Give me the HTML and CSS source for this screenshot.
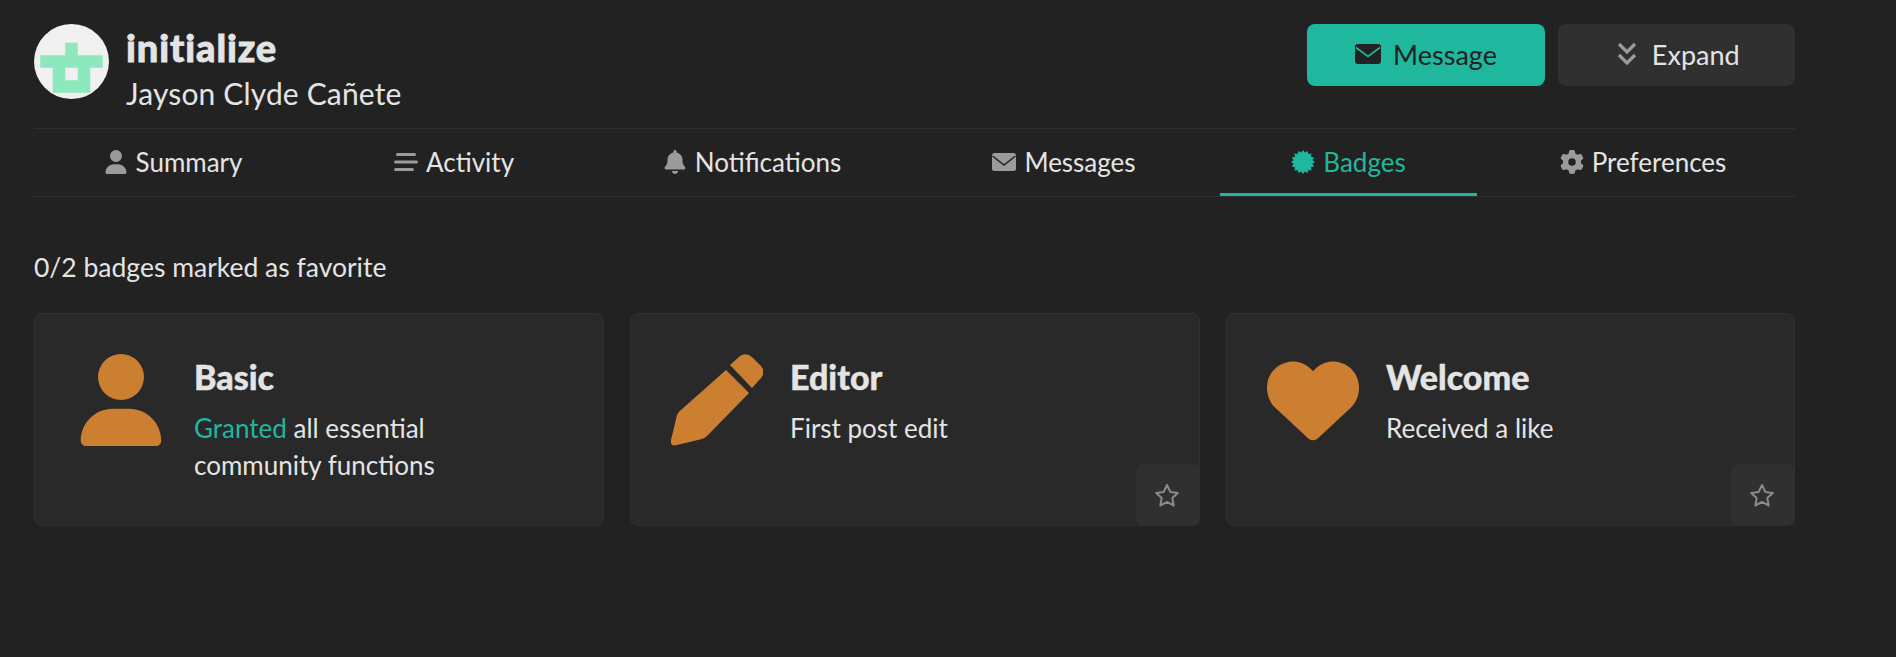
FILE: index.html
```html
<!DOCTYPE html>
<html lang="en">
<head>
    <meta charset="UTF-8">
    <meta name="viewport" content="width=device-width, initial-scale=1.0">
    <title>initialize - Badges</title>
    <link rel="stylesheet" href="styles.css">
</head>
<body>
    <div class="page">
        <header class="profile">
            <div class="profile-info">
                <svg class="avatar" viewBox="0 0 75 75">
                    <circle cx="37.5" cy="37.5" r="37.5" fill="#f0f0f0"/>
                    <path fill="#8de8bd" fill-rule="evenodd" d="M31.25 18.75h12.5v12.5h25v12.5h-12.5v25h-37.5v-25h-12.5v-12.5h25zM31.25 43.75v12.5h12.5v-12.5z"/>
                </svg>
                <div class="profile-names">
                    <h1>initialize</h1>
                    <p>Jayson Clyde Cañete</p>
                </div>
            </div>
            <div class="profile-actions">
                <button class="btn btn-primary" type="button">
                    <svg class="btn-icon" viewBox="0 0 26 20"><rect width="26" height="20" rx="3" fill="#222222"/><path d="M1 3.5L13 12.5L25 3.5" fill="none" stroke="#20b79f" stroke-width="1.6"/></svg>
                    Message
                </button>
                <button class="btn btn-dark" type="button">
                    <svg class="btn-icon-small" viewBox="0 0 20 24"><path d="M2 2L10 10L18 2M2 13L10 21L18 13" fill="none" stroke="#9b9b9b" stroke-width="3.2"/></svg>
                    Expand
                </button>
            </div>
        </header>

        <nav class="tabs">
            <a class="tab">
                <svg class="tab-icon" viewBox="0 0 448 512"><path d="M224 256A128 128 0 1 0 224 0a128 128 0 1 0 0 256zm-45.7 48C79.8 304 0 383.8 0 482.3C0 498.7 13.3 512 29.7 512H418.3c16.4 0 29.7-13.3 29.7-29.7C448 383.8 368.2 304 269.7 304H178.3z"/></svg>
                Summary
            </a>
            <a class="tab">
                <svg class="tab-icon" viewBox="0 0 24 24"><rect x="2" y="3" width="20" height="3" rx="1.5"/><rect x="0" y="10.5" width="24" height="3" rx="1.5"/><rect x="0" y="18" width="20" height="3" rx="1.5"/></svg>
                Activity
            </a>
            <a class="tab">
                <svg class="tab-icon" viewBox="0 0 448 512"><path d="M224 0c-17.7 0-32 14.3-32 32V51.2C119 66 64 130.6 64 208v18.8c0 47-17.3 92.4-48.5 127.6l-7.4 8.3c-8.4 9.4-10.4 22.9-5.3 34.4S19.4 416 32 416H416c12.6 0 24-7.4 29.2-18.9s3.1-25-5.3-34.4l-7.4-8.3C401.3 319.2 384 273.9 384 226.8V208c0-77.4-55-142-128-156.8V32c0-17.7-14.3-32-32-32zm45.3 493.3c12-12 18.7-28.3 18.7-45.3H224 160c0 17 6.7 33.3 18.7 45.3s28.3 18.7 45.3 18.7s33.3-6.7 45.3-18.7z"/></svg>
                Notifications
            </a>
            <a class="tab">
                <svg class="tab-icon" viewBox="0 0 24 24"><rect y="3" width="24" height="18" rx="2.5"/><path d="M0.5 6L12 15L23.5 6" fill="none" stroke="#222222" stroke-width="1.5"/></svg>
                Messages
            </a>
            <a class="tab tab-active">
                <svg class="tab-icon" viewBox="0 0 24 24"><polygon points="24,12 21.42,13.87 23.09,16.59 19.98,17.34 20.49,20.49 17.34,19.98 16.59,23.09 13.87,21.42 12,24 10.13,21.42 7.41,23.09 6.66,19.98 3.51,20.49 4.02,17.34 0.91,16.59 2.58,13.87 0,12 2.58,10.13 0.91,7.41 4.02,6.66 3.51,3.51 6.66,4.02 7.41,0.91 10.13,2.58 12,0 13.87,2.58 16.59,0.91 17.34,4.02 20.49,3.51 19.98,6.66 23.09,7.41 21.42,10.13"/></svg>
                Badges
            </a>
            <a class="tab tab-last">
                <svg class="tab-icon" viewBox="0 0 512 512"><path fill-rule="evenodd" d="M495.9 166.6c3.2 8.7 .5 18.4-6.4 24.6l-43.3 39.4c1.1 8.3 1.7 16.8 1.7 25.4s-.6 17.1-1.7 25.4l43.3 39.4c6.9 6.2 9.6 15.9 6.4 24.6c-4.4 11.9-9.7 23.3-15.8 34.3l-4.7 8.1c-6.6 11-14 21.4-22.1 31.2c-5.9 7.2-15.7 9.6-24.5 6.8l-55.7-17.7c-13.4 10.3-28.2 18.9-44 25.4l-12.5 57.1c-2 9.1-9 16.3-18.2 17.8c-13.8 2.3-28 3.5-42.5 3.5s-28.7-1.2-42.5-3.5c-9.2-1.5-16.2-8.7-18.2-17.8l-12.5-57.1c-15.8-6.5-30.6-15.1-44-25.4L83.1 425.9c-8.8 2.8-18.6 .3-24.5-6.8c-8.1-9.8-15.5-20.2-22.1-31.2l-4.7-8.1c-6.1-11-11.4-22.4-15.8-34.3c-3.2-8.7-.5-18.4 6.4-24.6l43.3-39.4C64.6 273.1 64 264.6 64 256s.6-17.1 1.7-25.4L22.4 191.2c-6.9-6.2-9.6-15.9-6.4-24.6c4.4-11.9 9.7-23.3 15.8-34.3l4.7-8.1c6.6-11 14-21.4 22.1-31.2c5.9-7.2 15.7-9.6 24.5-6.8l55.7 17.7c13.4-10.3 28.2-18.9 44-25.4l12.5-57.1c2-9.1 9-16.3 18.2-17.8C227.3 1.2 241.5 0 256 0s28.7 1.2 42.5 3.5c9.2 1.5 16.2 8.7 18.2 17.8l12.5 57.1c15.8 6.5 30.6 15.1 44 25.4l55.7-17.7c8.8-2.8 18.6-.3 24.5 6.8c8.1 9.8 15.5 20.2 22.1 31.2l4.7 8.1c6.1 11 11.4 22.4 15.8 34.3zM256 336a80 80 0 1 0 0-160 80 80 0 1 0 0 160z"/></svg>
                Preferences
            </a>
        </nav>

        <p class="favorites">0/2 badges marked as favorite</p>

        <section class="badges">
            <div class="badge-card">
                <svg class="badge-icon" viewBox="0 0 512 512"><path transform="translate(32 0)" d="M224 256A128 128 0 1 0 224 0a128 128 0 1 0 0 256zm-45.7 48C79.8 304 0 383.8 0 482.3C0 498.7 13.3 512 29.7 512H418.3c16.4 0 29.7-13.3 29.7-29.7C448 383.8 368.2 304 269.7 304H178.3z"/></svg>
                <div class="badge-text">
                    <h2>Basic</h2>
                    <p><span class="granted">Granted</span> all essential<br>community functions</p>
                </div>
            </div>

            <div class="badge-card">
                <svg class="badge-icon" viewBox="0 0 92 92"><path d="M55 16L78 39L36 82Q34 84 31 85L6 91Q-1 93 0 86L6 61Q7 58 10 56Z"/><path d="M59 11L69 2Q75 -2 81 3L90 12Q95 18 90 24L81 34Z"/></svg>
                <div class="badge-text">
                    <h2>Editor</h2>
                    <p>First post edit</p>
                </div>
                <button class="fav-btn" type="button">
                    <svg class="fav-icon" viewBox="0 0 26 24"><path d="M13 2L16.3 8.9L23.8 9.9L18.3 15.1L19.7 22.5L13 18.9L6.3 22.5L7.7 15.1L2.2 9.9L9.7 8.9Z"/></svg>
                </button>
            </div>

            <div class="badge-card">
                <svg class="badge-icon" viewBox="0 0 512 512"><path d="M47.6 300.4L228.3 469.1c7.5 7 17.4 10.9 27.7 10.9s20.2-3.9 27.7-10.9L464.4 300.4c30.4-28.3 47.6-68 47.6-109.5v-5.8c0-69.9-50.5-129.5-119.4-141C347 36.5 300.6 51.4 268 84L256 96 244 84c-32.6-32.6-79-47.5-124.6-39.9C50.5 55.6 0 115.2 0 185.1v5.8c0 41.5 17.2 81.2 47.6 109.5z"/></svg>
                <div class="badge-text">
                    <h2>Welcome</h2>
                    <p>Received a like</p>
                </div>
                <button class="fav-btn" type="button">
                    <svg class="fav-icon" viewBox="0 0 26 24"><path d="M13 2L16.3 8.9L23.8 9.9L18.3 15.1L19.7 22.5L13 18.9L6.3 22.5L7.7 15.1L2.2 9.9L9.7 8.9Z"/></svg>
                </button>
            </div>
        </section>
    </div>
</body>
</html>
```

FILE: styles.css
```css
body {
    margin: 0;
    background-color: #222222;
    color: #e4e4e4;
    font-family: Lato, "Open Sans", sans-serif;
}

.page {
    padding: 24px 101px 0 34px;
}

/* Header */
.profile {
    display: flex;
    justify-content: space-between;
    align-items: flex-start;
    height: 104px;
    border-bottom: 1px solid #303030;
}

.profile-info {
    display: flex;
    gap: 17px;
}

.avatar {
    width: 75px;
    height: 75px;
}

.profile-names h1 {
    margin: -1px 0 0;
    font-size: 38px;
    font-weight: 900;
    line-height: 48px;
    letter-spacing: 0.9px;
    -webkit-text-stroke: 0.8px #e4e4e4;
}

.profile-names p {
    margin: 0;
    font-size: 30px;
    font-weight: 400;
    line-height: 44px;
    letter-spacing: 0.15px;
}

.profile-actions {
    display: flex;
    gap: 12.5px;
}

.btn {
    display: flex;
    align-items: center;
    justify-content: center;
    gap: 12px;
    box-sizing: border-box;
    width: 237.5px;
    height: 62px;
    padding: 0 0 2px;
    border: none;
    border-radius: 8px;
    font-family: inherit;
    font-size: 27px;
}

.btn-primary {
    width: 238px;
    background-color: #20b79f;
    color: #222222;
}

.btn-dark {
    gap: 15px;
    padding-left: 4px;
    background-color: #303030;
    color: #e4e4e4;
}

.btn-icon {
    width: 26px;
    height: 20px;
}

.btn-icon-small {
    width: 20px;
    height: 24px;
}

/* Tabs */
.tabs {
    display: grid;
    grid-template-columns: 278px 284px 312px 312px 257px 318px;
    height: 67px;
    border-bottom: 1px solid #303030;
}

.tab {
    display: flex;
    align-items: center;
    justify-content: center;
    gap: 8px;
    box-sizing: border-box;
    height: 67px;
    padding-top: 2px;
    border-bottom: 3px solid transparent;
    font-size: 26px;
    color: #e4e4e4;
}

.tab-icon {
    width: 24px;
    height: 24px;
    fill: #9b9b9b;
}

.tab-active {
    border-bottom-color: #20b79f;
    color: #20b79f;
}

.tab-active .tab-icon {
    fill: #20b79f;
}

.tab-last {
    padding-left: 14px;
}

/* Badges */
.favorites {
    margin: 50px 0 26px;
    font-size: 26.5px;
    line-height: 40px;
}

.badges {
    display: grid;
    grid-template-columns: 570px 570px 569px;
    gap: 26px;
}

.badge-card {
    position: relative;
    display: flex;
    gap: 27px;
    box-sizing: border-box;
    height: 213px;
    padding: 40px;
    background-color: #292929;
    border: 1px solid #303030;
    border-radius: 8px;
}

.badge-icon {
    flex: none;
    width: 92px;
    height: 92px;
    fill: #cc7f30;
}

.badge-text h2 {
    margin: 1px 0 0;
    font-size: 34px;
    font-weight: 900;
    line-height: 44px;
    -webkit-text-stroke: 0.4px #e4e4e4;
}

.badge-text p {
    margin: 11px 0 0;
    font-size: 26px;
    line-height: 36.5px;
}

.granted {
    color: #20b79f;
}

.fav-btn {
    position: absolute;
    right: -1px;
    bottom: -1px;
    display: flex;
    align-items: center;
    justify-content: center;
    width: 64px;
    height: 62px;
    padding: 0 2px 0 0;
    background-color: #303030;
    border: none;
    border-radius: 8px;
}

.fav-icon {
    width: 26px;
    height: 24px;
    fill: none;
    stroke: #8a8a8a;
    stroke-width: 2;
    stroke-linejoin: round;
}
```
